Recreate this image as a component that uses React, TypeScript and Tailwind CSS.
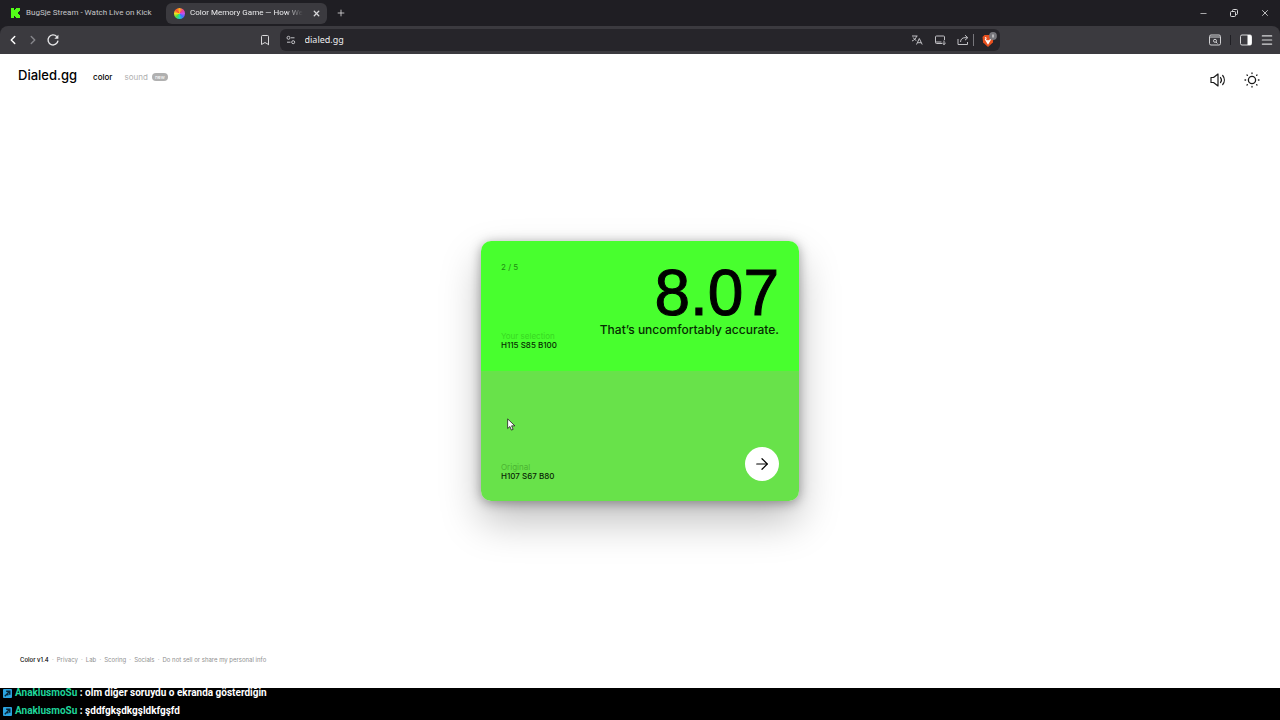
import { useState } from "react";
import {
  ArrowRight,
  Bookmark,
  ChevronLeft,
  ChevronRight,
  Menu,
  Minus,
  Plus,
  X,
} from "lucide-react";

const footerLinks = ["Privacy", "Lab", "Scoring", "Socials", "Do not sell or share my personal info"];

const chatMessages = [
  { id: 1, user: "AnaklusmoSu", text: "olm diğer soruydu o ekranda gösterdiğin" },
  { id: 2, user: "AnaklusmoSu", text: "şddfgkşdkgşldkfgşfd" },
];

function KickIcon() {
  return (
    <svg viewBox="0 0 10 10" className="w-[10px] h-[10px] shrink-0">
      <path fill="#53fc18" d="M1 0h3v2h1V1h1V0h4v3H9v1H8v2h1v1h1v3H6V9H5V8H4v2H1z" />
    </svg>
  );
}

function ReloadIcon() {
  return (
    <svg viewBox="0 0 14 14" className="w-[14px] h-[14px]" fill="none" stroke="#e6e6e8" strokeWidth="1.4">
      <path d="M12 7.6A5 5 0 1 1 10.8 3.6" />
      <path d="M12.4 1.8v4H8.4z" fill="#e6e6e8" stroke="none" />
    </svg>
  );
}

function SiteSettingsIcon() {
  return (
    <svg viewBox="0 0 10 10" className="w-[10px] h-[10px]" fill="none" stroke="#c4c4c8" strokeWidth="1">
      <circle cx="2.5" cy="2.8" r="1.5" />
      <path d="M5 2.8h3.5M1 7.2h3.5" />
      <circle cx="7.2" cy="7.2" r="1.5" />
    </svg>
  );
}

function TranslateIcon() {
  return (
    <svg viewBox="0 0 12 12" className="w-3 h-3" fill="none" stroke="#c0c0c4" strokeWidth="1">
      <path d="M1 2h5.5M5.5 2C5 4.500 3.500 6 1 7M2.200 3.500C3 5 4 6 5.400 6.600" />
      <path d="M5.500 10.500L8.300 4.500l2.900 6M6.500 8.700h3.700" />
    </svg>
  );
}

function InstallIcon() {
  return (
    <svg viewBox="0 0 12 12" className="w-3 h-3" fill="none" stroke="#c0c0c4" strokeWidth="1">
      <path d="M10.500 6V3a1 1 0 0 0-1-1h-7a1 1 0 0 0-1 1v5.500a1 1 0 0 0 1 1H8M1.500 8h6M10 6.500v4M8.300 9l1.700 1.600L11.700 9" />
    </svg>
  );
}

function ShareIcon() {
  return (
    <svg viewBox="0 0 12 12" className="w-3 h-3" fill="none" stroke="#c0c0c4" strokeWidth="1">
      <path d="M1 5v5.500h9.500V8M3.500 8C3.700 5 5.500 3.700 8 3.700h2.500M8 1.200l2.800 2.500L8 6.200" />
    </svg>
  );
}

function BraveIcon() {
  return (
    <svg viewBox="0 0 16 16" className="w-4 h-4">
      <path fill="#e8501e" d="M3.500 3h7l2 2-.6 5.500L7 15l-4.900-4.500L1.500 5z" />
      <path fill="none" stroke="#fff" strokeWidth="1.300" d="M4 5.500l1.500 1M4.200 7l2.800 4.500L9.700 7M5.500 9h3" />
      <circle cx="12" cy="4" r="3.900" fill="#77777c" />
      <path stroke="#e4e4e6" strokeWidth="1.200" d="M12 2.500v3" />
    </svg>
  );
}

function TabSearchIcon() {
  return (
    <svg viewBox="0 0 12 12" className="w-3 h-3" fill="none" stroke="#d0d0d3">
      <rect x="0.500" y="1" width="11" height="10" rx="1.500" />
      <path d="M1 3h10M7 8l1.500 1.500" />
      <circle cx="6" cy="6.800" r="1.500" />
    </svg>
  );
}

function SidebarIcon() {
  return (
    <svg viewBox="0 0 12 12" className="w-3 h-3">
      <rect x="0.500" y="1" width="11" height="10" rx="1.500" fill="none" stroke="#d8d8da" />
      <path d="M7.500 1H10a1.500 1.500 0 0 1 1.500 1.500v7A1.500 1.500 0 0 1 10 11H7.500z" fill="#fff" />
    </svg>
  );
}

function RestoreIcon() {
  return (
    <svg viewBox="0 0 8 8" className="w-2 h-2" fill="none" stroke="#d8d8da">
      <rect x="0.500" y="2.500" width="5" height="5" rx="1" />
      <path d="M2.500 2.500V1.500a1 1 0 0 1 1-1h3a1 1 0 0 1 1 1v3a1 1 0 0 1-1 1h-1" />
    </svg>
  );
}

function SpeakerIcon() {
  return (
    <svg viewBox="0 0 16 16" className="w-4 h-4" fill="none" stroke="#1a1a1a" strokeWidth="1.200" strokeLinejoin="round" strokeLinecap="round">
      <path d="M1 5.500h2.500L8 2v12l-4.500-3.500H1zM10.500 5.500a4 4 0 0 1 0 5M12.700 3.500a7 7 0 0 1 0 9" />
    </svg>
  );
}

function SunIcon() {
  return (
    <svg viewBox="0 0 16 16" className="w-4 h-4" fill="none" stroke="#1a1a1a" strokeWidth="1.300" strokeLinecap="round">
      <circle cx="8" cy="8" r="3.600" />
      <path d="M8 1v.6M8 14.400v.6M1 8h.6M14.400 8h.6M3 3l.4.4M12.600 12.600l.4.4M3 13l.4-.4M12.600 3.400l.4-.4" />
    </svg>
  );
}

function BadgeIcon() {
  return (
    <svg viewBox="0 0 10 10" className="w-[9px] h-[9px] shrink-0">
      <rect width="10" height="10" rx="1" fill="#2ba4e0" />
      <path d="M3.500 2.500h4v4M7.500 2.500L5 5M2 8l2.500-2.500L6 7" fill="none" stroke="#06283a" strokeWidth="1.600" />
    </svg>
  );
}

function BrowserChrome() {
  const [url, setUrl] = useState("dialed.gg");

  return (
    <div className="bg-[#1f1e23] text-[#d8d8da] font-['Roboto',sans-serif] text-[8px]">
      <div className="flex items-center h-[26px] pl-[10px] pr-[10px]">
        <button className="flex items-center gap-[6px] w-[156px] text-[#c6c6c9] whitespace-nowrap">
          <KickIcon />
          BugSje Stream - Watch Live on Kick
        </button>
        <div className="flex items-center h-[21px] w-[161px] rounded-md bg-[#3b3a3f] pl-2 pr-[6px]">
          <button className="flex items-center gap-[5px] min-w-0 flex-1">
            <span className="w-[11px] h-[11px] shrink-0 rounded-full bg-[conic-gradient(#ffb020,#f0408a,#c050f0,#4070ff,#20d0c0,#50e040,#f0e020,#ff5030,#ffb020)]" />
            <span className="overflow-hidden whitespace-nowrap text-[#ececee] [mask-image:linear-gradient(to_right,black_85%,transparent)]">
              Color Memory Game — How We
            </span>
          </button>
          <button aria-label="Close tab" className="ml-[6px]">
            <X className="w-[9px] h-[9px]" strokeWidth={3.5} />
          </button>
        </div>
        <button aria-label="New tab" className="ml-[9px]">
          <Plus className="w-[10px] h-[10px]" strokeWidth={2} />
        </button>
        <div className="ml-auto flex items-center gap-[22px]">
          <button aria-label="Minimize"><Minus className="w-[9px] h-[9px]" /></button>
          <button aria-label="Restore"><RestoreIcon /></button>
          <button aria-label="Close"><X className="w-[10px] h-[10px]" /></button>
        </div>
      </div>

      <div className="flex items-center h-7 rounded-t-lg bg-[#3b3a3f] pl-[6px] pr-[6px]">
        <div className="flex items-center gap-[6px]">
          <button aria-label="Back"><ChevronLeft className="w-[14px] h-[14px] text-white" strokeWidth={2.5} /></button>
          <button aria-label="Forward"><ChevronRight className="w-[14px] h-[14px] text-[#85858a]" strokeWidth={2.5} /></button>
          <button aria-label="Reload"><ReloadIcon /></button>
        </div>
        <div className="flex flex-1 items-center justify-center gap-[9px] pr-[11px]">
          <button aria-label="Bookmark"><Bookmark className="w-3 h-3" /></button>
          <div className="flex items-center h-[22px] w-[720px] rounded-md bg-[#26252a] pl-[6px] pr-[3px]">
            <SiteSettingsIcon />
            <input
              aria-label="Address"
              value={url}
              onChange={(e) => setUrl(e.target.value)}
              className="ml-[9px] min-w-0 flex-1 bg-transparent font-['Noto_Sans',sans-serif] text-[9px] text-[#ececee] outline-none"
            />
            <div className="flex items-center gap-[11px]">
              <button aria-label="Translate"><TranslateIcon /></button>
              <button aria-label="Install"><InstallIcon /></button>
              <button aria-label="Share"><ShareIcon /></button>
            </div>
            <span className="ml-1 mr-[7px] w-px h-3 bg-[#77777c]" />
            <button aria-label="Shields"><BraveIcon /></button>
          </div>
        </div>
        <div className="flex items-center gap-[9px]">
          <button aria-label="Search tabs"><TabSearchIcon /></button>
          <span className="w-px h-[10px] bg-[#1f1e23]" />
          <button aria-label="Sidebar"><SidebarIcon /></button>
          <button aria-label="Menu"><Menu className="w-[14px] h-[14px] -ml-px" /></button>
        </div>
      </div>
    </div>
  );
}

function ResultCard() {
  return (
    <section className="relative flex flex-col w-[318px] h-[260px] rounded-[10px] shadow-[0_2px_12px_rgba(0,0,0,0.35),0_20px_40px_rgba(0,0,0,0.25)] text-[8px] leading-[9px]">
      <div className="flex h-1/2 justify-between rounded-t-[10px] bg-[#48ff2e] px-5 pt-[22px] pb-[21px]">
        <div className="flex flex-col justify-between">
          <p className="text-[#1f8d12]">2 / 5</p>
          <div>
            <p className="text-[#38d822]">Your selection</p>
            <p className="font-medium text-[#062b02]">H115 S85 B100</p>
          </div>
        </div>
        <div className="text-right text-black">
          <p className="font-['Liberation_Sans',sans-serif] text-[64px] leading-[60px] [-webkit-text-stroke:1px]">8.07</p>
          <p className="text-[12px] leading-[14px] font-medium text-[#062b02]">That’s uncomfortably accurate.</p>
        </div>
      </div>
      <div className="flex h-1/2 items-end justify-between rounded-b-[10px] bg-[#68e24a] px-5 py-5">
        <div>
          <p className="text-[#4bb431]">Original</p>
          <p className="font-medium text-[#0a2605]">H107 S67 B80</p>
        </div>
        <button
          aria-label="Next round"
          className="flex items-center justify-center w-[34px] h-[34px] rounded-full bg-white text-black"
        >
          <ArrowRight className="w-[18px] h-[18px]" strokeWidth={1.6} />
        </button>
      </div>
      {/* Mouse pointer */}
      <svg viewBox="0 0 10 14" className="absolute left-[26px] top-[177px] w-[9px] h-[13px]">
        <path d="M.7.8v10.700l2.500-2.300 1.700 4 1.900-.8-1.700-3.900h3.700z" fill="#fff" stroke="#222" strokeWidth=".9" />
      </svg>
    </section>
  );
}

export default function App() {
  return (
    <div className="flex flex-col h-screen overflow-hidden bg-white font-['Inter',sans-serif]">
      <BrowserChrome />

      <div className="flex flex-col flex-1 min-h-0">
        <header className="flex items-center justify-between h-12 pl-[18px] pr-5">
          <div className="flex items-center gap-4 pb-[6px]">
            <h1 className="text-[13px] leading-5 font-medium text-black">Dialed.gg</h1>
            <nav className="flex items-center gap-3 text-[8px] leading-3 pt-[3px]">
              <a href="#color" className="font-medium text-black">color</a>
              <a href="#sound" className="flex items-center gap-1 text-[#b0b0b0]">
                sound
                <span className="flex items-center justify-center w-4 h-2 rounded-full bg-[#b0b0b0] text-[5px] text-white">new</span>
              </a>
            </nav>
          </div>
          <div className="flex items-center gap-[18px] pt-1">
            <button aria-label="Toggle sound"><SpeakerIcon /></button>
            <button aria-label="Toggle theme"><SunIcon /></button>
          </div>
        </header>

        <main className="flex flex-1 items-center justify-center">
          <ResultCard />
        </main>

        <footer className="flex items-center h-12 px-5 pb-2 text-[6px] leading-2 text-[#8f8f8f]">
          <span className="font-medium text-black">Color v1.4</span>
          {footerLinks.map((link) => (
            <span key={link} className="flex">
              <span className="w-2 text-center">·</span>
              <a href="#info">{link}</a>
            </span>
          ))}
        </footer>
      </div>

      {/* Stream chat overlay */}
      <ul className="h-8 flex flex-col justify-end bg-black overflow-hidden font-['Roboto',sans-serif] text-[10px] leading-[18px] font-bold text-white">
        {chatMessages.map((message) => (
          <li key={message.id} className="flex items-center shrink-0 pl-[3px] whitespace-pre">
            <BadgeIcon />
            <span className="ml-[3px] text-[#1fd69b]">{message.user}</span>
            <span> : {message.text}</span>
          </li>
        ))}
      </ul>
    </div>
  );
}
